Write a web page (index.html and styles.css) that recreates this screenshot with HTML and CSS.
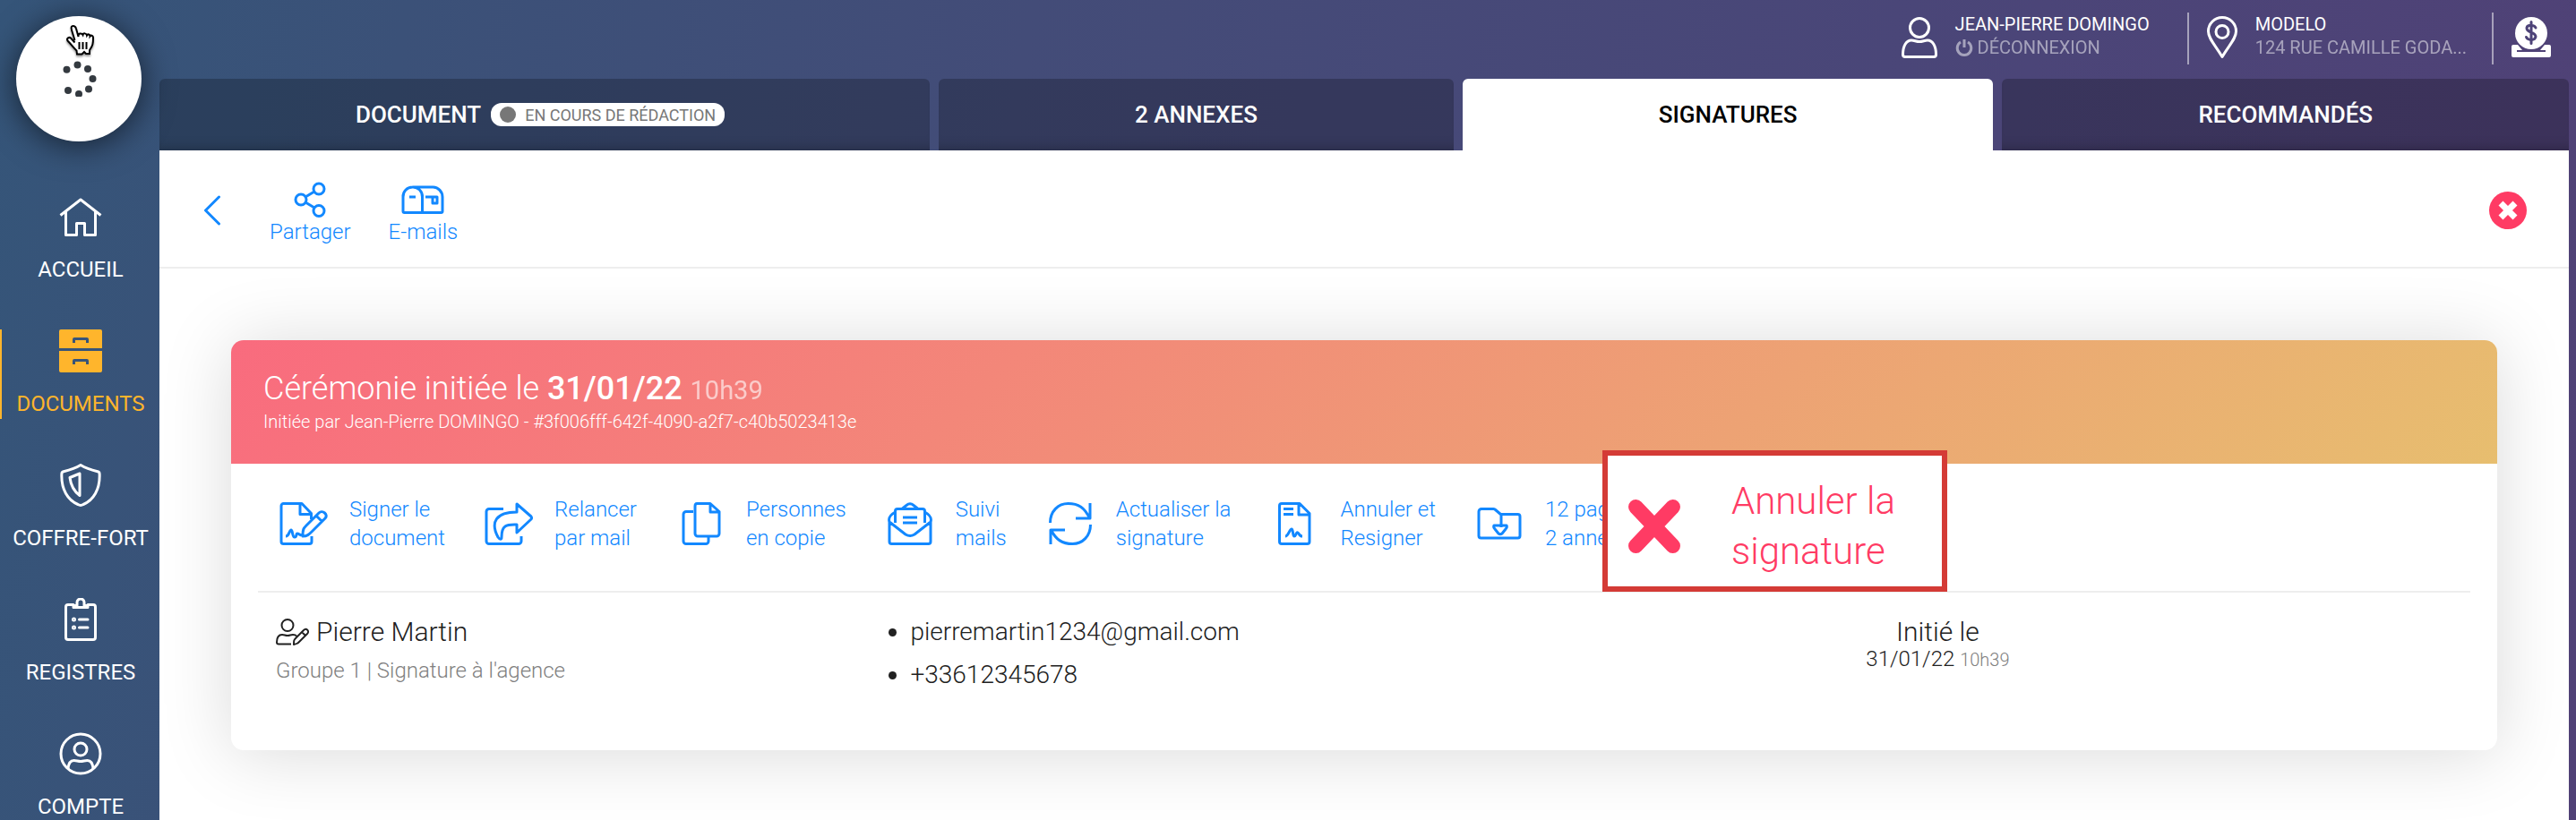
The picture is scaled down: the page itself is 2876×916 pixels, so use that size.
FILE: index.html
```html
<!DOCTYPE html>
<html lang="fr"><head><meta charset="utf-8">
<title>Signatures</title>
<meta name="viewport" content="width=device-width">
<link rel="stylesheet" href="styles.css">
</head><body>

<div class="app">
<aside class="sidebar">
	<a class="logo" href="#" aria-label="Chargement">
		<svg class="spinner" viewBox="0 0 40 40"><circle cx="6.5" cy="9.7" r="4"/><circle cx="18.5" cy="4.5" r="4"/><circle cx="30" cy="9" r="4"/><circle cx="35.5" cy="20" r="4"/><circle cx="31" cy="31.5" r="4"/><circle cx="20" cy="37" r="4"/><circle cx="8" cy="33" r="4"/></svg>
		<svg class="cursor" viewBox="0 0 32 34"><path d="M10.500 17 7 5.500C6 2 7 1 8.500 1S11.500 2 12 4l2.500 9c-.5-4 3.500-4.500 5-2 .5-2.500 4-2 4.500.5 1-2 3.500-1 3.500 1 1-1.500 3.500-1 3.500 1.500 0 7-.5 9-4 14v4h-4l-2-2-2.500 2.500H13l-.5-4C9 25.500 7 22 2.500 17.500c-1.500-2.500 1.500-5 4-2.500l4 4.500"/><path d="M15.500 19v8M19.500 19v8M23.500 19v8"/></svg>
	</a>
	<nav class="menu">
		<a href="#">
			<svg class="line" viewBox="0 0 48 48"><path d="M1.500 22.500 24 5l22.500 17.500M7.500 18v26.500h12v-13h9v13h12V18"/></svg>
			<span>ACCUEIL</span>
		</a>
		<a href="#" class="active">
			<svg viewBox="0 0 48 48"><path fill="currentColor" fill-rule="evenodd" d="M2 0h44a2 2 0 0 1 2 2v19H0V2a2 2 0 0 1 2-2zM15 15h3v-3h12v3h3v-4a2 2 0 0 0-2-2H17a2 2 0 0 0-2 2zM0 24h48v22a2 2 0 0 1-2 2H2a2 2 0 0 1-2-2zM15 39h3v-3h12v3h3v-4a2 2 0 0 0-2-2H17a2 2 0 0 0-2 2z"/></svg>
			<span>DOCUMENTS</span>
		</a>
		<a href="#">
			<svg class="line" viewBox="0 0 48 48"><path d="M24 1.500c-4 2.500-12 5.500-19 7.200-1.500.4-2 1-2.100 2.300C2 29 10 41 21 45.500c2 1.200 4 1.200 6 0C38 41 46 29 45.100 11c-.1-1.300-.6-1.900-2.100-2.300-7-1.700-15-4.700-19-7.200zM23 11v24.500C17 31 13 24 12 15.500z"/></svg>
			<span>COFFRE-FORT</span>
		</a>
		<a href="#">
			<svg class="line" viewBox="0 0 48 48"><path d="M16 7.500H10A2.500 2.500 0 0 0 7.500 10v34a2.500 2.500 0 0 0 2.500 2.500h28a2.500 2.500 0 0 0 2.500-2.500V10A2.500 2.500 0 0 0 38 7.500h-6M16 10.500h16V8.500h-4V5a4 4 0 0 0-8 0v3.500h-4zM22.500 24H32M22.500 33H32" stroke-linecap="round"/><circle cx="16.500" cy="24" r="1"/><circle cx="16.500" cy="33" r="1"/></svg>
			<span>REGISTRES</span>
		</a>
		<a href="#">
			<svg class="line" viewBox="0 0 48 48"><circle cx="24" cy="24" r="22"/><circle cx="24" cy="19" r="7"/><path d="M10 41c.5-7 2.500-9.500 6.500-9.500 3 0 4.500 1 7.500 1s4.500-1 7.500-1c4 0 6 2.500 6.500 9.500"/></svg>
			<span>COMPTE</span>
		</a>
	</nav>
</aside>

<div class="page">
<header class="topbar">
	<div class="info user">
		<svg class="line" viewBox="0 0 40 48"><circle cx="20" cy="13" r="10.500"/><path d="M4 45.500h32a2.500 2.500 0 0 0 2.500-2.500c0-10-4-16-9.500-16-3 0-5.500 1.500-9 1.500s-6-1.500-9-1.500C5.500 27 1.500 33 1.500 43A2.500 2.500 0 0 0 4 45.500z"/></svg>
		<div>
			<div>JEAN-PIERRE DOMINGO</div>
			<a href="#"><svg class="power line" viewBox="0 0 20 20"><path d="M6 4a7.800 7.800 0 1 0 8 0M10 1v9"/></svg> DÉCONNEXION</a>
		</div>
	</div>
	<div class="info place">
		<svg class="line" viewBox="0 0 34 48"><path d="M17 45.500C9 32 1.500 25 1.500 17a15.500 15.500 0 0 1 31 0c0 8-7.500 15-15.500 28.500z"/><circle cx="17" cy="17.500" r="7"/></svg>
		<div>
			<div>MODELO</div>
			<a href="#">124 RUE CAMILLE GODA...</a>
		</div>
	</div>
	<a class="info credit" href="#" aria-label="Crédits">
		<svg viewBox="0 0 44 48"><path fill="currentColor" d="M0 34a2 2 0 0 1 2-2h5l5 6H6v2h32v-2h-6l5-6h5a2 2 0 0 1 2 2v10a2 2 0 0 1-2 2H2a2 2 0 0 1-2-2z"/><circle cx="22" cy="19" r="18" fill="currentColor"/><path d="M27 13c-1-3-9-4-10 0-.5 6 10 4 10 10-1 5-9 4-10.500.500M22 6.500v24" fill="none" stroke="#4d4378" stroke-width="3" stroke-linecap="round"/></svg>
	</a>
</header>

<nav class="tabs">
	<a href="#">DOCUMENT <span class="badge">EN COURS DE RÉDACTION</span></a>
	<a href="#">2 ANNEXES</a>
	<a href="#" class="active">SIGNATURES</a>
	<a href="#">RECOMMANDÉS</a>
</nav>

<main>
	<div class="toolbar">
		<button class="back" aria-label="Retour"><svg class="line" viewBox="0 0 20 34"><path d="M17.500 2 2.500 17l15 15" stroke-linecap="round"/></svg></button>
		<button class="tool"><svg class="line" viewBox="0 0 48 40"><circle cx="34" cy="8" r="6"/><circle cx="14" cy="20" r="6"/><circle cx="34" cy="32.500" r="6"/><path d="m19 17 10-6M19 23l10 6"/></svg>Partager</button>
		<button class="tool"><svg class="line" viewBox="0 0 48 40"><path d="M12.500 6h23A11 11 0 0 1 46 17v16a1.500 1.500 0 0 1-1.500 1.500h-41A1.500 1.500 0 0 1 2 33V17A10.500 10.500 0 0 1 12.500 6zM12.500 6A10.500 10.500 0 0 1 23.500 17v17.500M9 17h7M27 17h13v7h-5v-7"/></svg>E-mails</button>
		<button class="close" aria-label="Fermer"><svg viewBox="0 0 42 42"><circle cx="21" cy="21" r="21"/><path d="m13 13 16 16M29 13 13 29"/></svg></button>
	</div>

	<section class="card">
		<header class="card-head">
			<h1>Cérémonie initiée le <b>31/01/22</b> <small>10h39</small></h1>
			<p>Initiée par Jean-Pierre DOMINGO - #3f006fff-642f-4090-a2f7-c40b5023413e</p>
		</header>
		<div class="actions">
			<button>
				<svg class="line" viewBox="0 0 54 48"><path d="M36 38v6a2.500 2.500 0 0 1-2.500 2.500h-29A2.500 2.500 0 0 1 2 44V4a2.500 2.500 0 0 1 2.500-2.500H25l10.500 11V19M23 1.500v12h12.500M7 38c4 0 4-7 6-7s1 8 4 8 1-4 3-4 2 2 6 2M26 38c0-8 1-9 4-12l14-14c4-4 11 2 7 6L36 33c-3 3-5 5-10 5zM41 15l7 7"/></svg>
				<span>Signer le<br>document</span>
			</button>
			<button>
				<svg class="line" viewBox="0 0 54 48"><path d="M21 7.500H5A3 3 0 0 0 2 10.500v33a3 3 0 0 0 3 3h33a3 3 0 0 0 3-3V38M36 2l16 14q1 1.500 0 3L36 34V25c-12-.5-17 1-17 14 0 3-2 3-4 0C6 22 13 11 36 11z"/></svg>
				<span>Relancer<br>par mail</span>
			</button>
			<button>
				<svg class="line" viewBox="0 0 54 48"><path d="M19 10.500h-8A3 3 0 0 0 8 13.500v30a3 3 0 0 0 3 3h22a3 3 0 0 0 3-3v-6M23 1.500h15l10 9V35a3 3 0 0 1-3 3H24a3 3 0 0 1-3-3V4.500q0-3 2-3M38 2v9h10"/></svg>
				<span>Personnes<br>en copie</span>
			</button>
			<button>
				<svg class="line" viewBox="0 0 54 48"><path d="M4 22v22a2.500 2.500 0 0 0 2.500 2.500h41A2.500 2.500 0 0 0 50 44V22M10.500 23V10A2.500 2.500 0 0 1 13 7.500h28a2.500 2.500 0 0 1 2.500 2.500v13M4 22c-2-6 3-9 6.500-11v12M50 22c2-6-3-9-6.500-11v12M4 22l18 14q5 3 10 0l18-14M18 7.500l5-4q4-3.500 8 0l5 4M19 17h16M19 23h16"/></svg>
				<span>Suivi<br>mails</span>
			</button>
			<button>
				<svg class="line" viewBox="0 0 54 48"><path d="M4.500 23c0-13 9-21.500 20-21.500C36 1.500 43 6 48.500 18M49 1v17H33M49.500 25c0 13-9 21.500-20 21.500C18 46.500 11 42 5.500 31M5 47V31h16"/></svg>
				<span>Actualiser la<br>signature</span>
			</button>
			<button>
				<svg class="line" viewBox="0 0 54 48"><path d="M13 1.500h20l11 11V44a2.500 2.500 0 0 1-2.500 2.500H13a2.500 2.500 0 0 1-2.500-2.500V4A2.500 2.500 0 0 1 13 1.500zM32 2v12h12M15 7.500h11M15 13.500h11M17 38c3 0 5-8 7-8s1 8 3 8 2-5 4-4 1 4 5 4"/></svg>
				<span>Annuler et<br>Resigner</span>
			</button>
			<div class="download">
				<button>
					<svg class="line" viewBox="0 0 54 48"><path d="M29 28V14L22 8a3 3 0 0 0-2-.5H7a3 3 0 0 0-3 3v27A2.500 2.500 0 0 0 6.500 40h41a2.500 2.500 0 0 0 2.500-2.500V16a2.500 2.500 0 0 0-2.500-2.500H29M21 26h14q1 2-1 4l-4 5q-2 1.500-4 0l-4-5q-2-2-1-4z"/></svg>
					<span>12 pages<br>2 annexes</span>
				</button>
				<button class="cancel">
					<svg viewBox="0 0 58 58"><path d="m9 8 40 42M49 8 9 50"/></svg>
					<span>Annuler la<br>signature</span>
				</button>
			</div>
		</div>
		<div class="signer">
			<div>
				<div class="name"><svg class="line" viewBox="0 0 38 30"><circle cx="13" cy="7.500" r="6.500"/><path d="M17 28.500H3a2 2 0 0 1-2-2C1 20 4 18 7 18c3 0 3 1 6 1s3-1 6-1q3 0 4 1.500M20 29c0-5 0-5 3-8l8-8c3-3 7 1 4 4l-8 8c-3 3-3 3-7 4zM29 15l4 4"/></svg> Pierre Martin</div>
				<div class="group">Groupe 1 | Signature à l'agence</div>
			</div>
			<ul>
				<li>pierremartin1234@gmail.com</li>
				<li>+33612345678</li>
			</ul>
			<div class="status">
				<div class="name">Initié le</div>
				<div class="date">31/01/22 <small>10h39</small></div>
			</div>
		</div>
	</section>
</main>
</div>
</div>

</body></html>
```

FILE: styles.css
```css
* {
	box-sizing: border-box;
}
body {
	margin: 0;
	font-family: Roboto, sans-serif;
	font-weight: 300;
	font-size: 24px;
	color: #212121;
}
a {
	color: inherit;
	text-decoration: none;
}
button {
	margin: 0;
	padding: 0;
	border: none;
	background: none;
	font: inherit;
	color: #1288ff;
	cursor: pointer;
}
svg {
	display: block;
	flex: none;
}
.line {
	fill: none;
	stroke: currentColor;
	stroke-width: 3;
	stroke-linejoin: round;
}
.app {
	display: flex;
	height: 100vh;
	overflow: hidden;
	background: linear-gradient(100deg, #355579, #3b5178 15%, #434c78 38%, #4b4578 75%, #504176);
}

/* sidebar */
.sidebar {
	flex: none;
	width: 178px;
	color: white;
	font-weight: 400;
}
.logo {
	position: relative;
	display: flex;
	align-items: center;
	justify-content: center;
	width: 140px;
	height: 140px;
	margin: 18px 18px 60px;
	border-radius: 50%;
	background: white;
	box-shadow: 0 4px 36px rgba(0, 0, 0, .6);
}
.spinner {
	width: 40px;
	fill: #343a40;
}
.cursor {
	position: absolute;
	top: 10px;
	left: 55px;
	width: 32px;
	fill: white;
	stroke: black;
	stroke-width: 2;
	filter: drop-shadow(0 2px 1px rgba(0, 0, 0, .4));
}
.menu {
	display: flex;
	flex-direction: column;
	gap: 50px;
}
.menu a {
	display: flex;
	flex-direction: column;
	align-items: center;
	gap: 19px;
	height: 100px;
	border-left: 2px solid transparent;
	line-height: 32px;
}
.menu .active {
	border-color: #ffb52c;
	color: #ffb52c;
}
.menu svg {
	width: 48px;
}

/* header */
.page {
	flex: 1;
	display: flex;
	flex-direction: column;
	min-width: 0;
	padding-right: 8px;
}
.topbar {
	flex: none;
	display: flex;
	justify-content: flex-end;
	height: 88px;
	padding: 14px 20px 16px 0;
	color: white;
	font-size: 20px;
	font-weight: 400;
	line-height: 26px;
}
.info {
	display: flex;
	gap: 20px;
	padding: 0 28px 0 20px;
	border-left: 2px solid rgba(255, 255, 255, .5);
}
.info a {
	display: flex;
	align-items: center;
	gap: 5px;
	opacity: .5;
}
.info > svg {
	height: 48px;
	margin-top: 4px;
}
.user {
	padding-right: 42px;
	border: none;
}
.credit {
	padding-right: 0;
}
.power {
	width: 20px;
}
.tabs {
	flex: none;
	display: flex;
	gap: 10px;
	height: 80px;
}
.tabs a {
	flex: 1 1 auto;
	display: flex;
	align-items: center;
	justify-content: center;
	gap: 11px;
	border-radius: 6px 6px 0 0;
	background: rgba(0, 0, 0, .23);
	box-shadow: inset 0 -14px 14px -12px rgba(0, 0, 0, .25);
	color: white;
	font-size: 26px;
	font-weight: 500;
}
.tabs .active {
	background: white;
	box-shadow: none;
	color: black;
}
.badge {
	display: flex;
	align-items: center;
	gap: 10px;
	height: 26px;
	margin-right: 10px;
	padding: 0 10px;
	border-radius: 12px;
	background: white;
	color: #777;
	font-size: 18px;
	font-weight: 400;
}
.badge::before {
	content: "";
	width: 18px;
	height: 18px;
	border-radius: 50%;
	background: #777;
}

/* content */
main {
	flex: 1;
	background: white;
}
.toolbar {
	display: flex;
	align-items: center;
	gap: 42px;
	height: 132px;
	padding: 4px 47px 0 49px;
	border-bottom: 2px solid #eee;
}
.toolbar button {
	line-height: 32px;
}
.toolbar svg {
	height: 40px;
	margin: 0 auto;
}
.toolbar .tool {
	padding-top: 8px;
}
.toolbar .back {
	margin-right: 12px;
}
.toolbar .back svg {
	height: 34px;
}
.toolbar .close {
	margin-left: auto;
}
.toolbar .close svg {
	width: 42px;
	height: 42px;
	fill: #ff3b64;
}
.close path {
	stroke: white;
	stroke-width: 7;
}
.card {
	margin: 80px;
	border-radius: 14px;
	background: white;
	box-shadow: 0 4px 80px rgba(0, 0, 0, .15);
}
.card-head {
	height: 138px;
	padding: 30px 36px;
	border-radius: 14px 14px 0 0;
	background: linear-gradient(135deg, #f96b7e, #e7be6f);
	color: white;
}
.card-head h1 {
	margin: 0;
	font-size: 36px;
	font-weight: 300;
	line-height: 48px;
}
.card-head b {
	font-weight: 500;
}
.card-head small {
	font-size: 29px;
	font-weight: 400;
	opacity: .6;
}
.card-head p {
	margin: 0;
	font-size: 20px;
	line-height: 22px;
}
.actions {
	display: flex;
	align-items: center;
	gap: 44px;
	height: 144px;
	margin: 0 30px;
	padding: 0 24px 8px;
	border-bottom: 2px solid #eee;
}
.actions button {
	display: flex;
	align-items: center;
	gap: 24px;
	line-height: 32px;
	text-align: left;
}
.actions svg {
	width: 54px;
}
.download {
	position: relative;
}
/* sits over the end of the row */
.actions .cancel {
	position: absolute;
	top: -50px;
	left: 142px;
	gap: 56px;
	padding: 23px 52px 11px 22px;
	border: 6px solid #d43b36;
	background: white;
	color: #ff3b64;
	font-size: 42px;
	line-height: 56px;
	white-space: nowrap;
}
.cancel svg {
	width: 60px;
}
.cancel path {
	stroke: currentColor;
	stroke-width: 16;
	stroke-linecap: round;
}
.signer {
	display: grid;
	grid-template-columns: 21fr 22fr 38fr;
	padding: 24px 56px 56px 50px;
	font-size: 28px;
}
.name {
	display: flex;
	align-items: center;
	gap: 7px;
	font-size: 30px;
	line-height: 40px;
}
.name svg {
	width: 38px;
	stroke-width: 2;
}
.group {
	font-size: 24px;
	line-height: 46px;
	color: #808080;
}
.signer ul {
	margin: -4px 0 4px;
	padding-left: 80px;
	line-height: 48px;
}
.status {
	text-align: center;
}
.status .name {
	justify-content: center;
}
.date {
	font-size: 24px;
	line-height: 20px;
}
.date small {
	font-size: 20px;
	color: #808080;
}
```
